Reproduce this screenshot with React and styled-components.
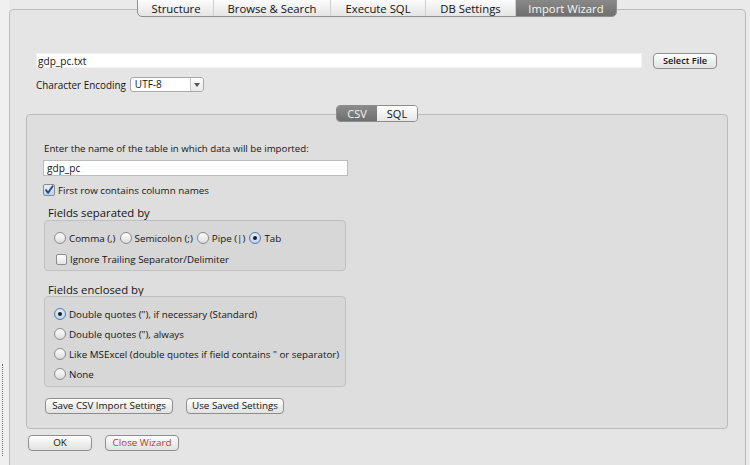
import React from "react";
import styled, { createGlobalStyle } from "styled-components";

const TABS = [
  { label: "Structure", width: 75 },
  { label: "Browse & Search", width: 117 },
  { label: "Execute SQL", width: 95 },
  { label: "DB Settings", width: 90 },
  { label: "Import Wizard", width: 101, active: true },
];

const SEPARATORS = [
  { label: "Comma (,)" },
  { label: "Semicolon (;)" },
  { label: "Pipe (|)" },
  { label: "Tab", checked: true },
];

const QUOTES = [
  { label: 'Double quotes ("), if necessary (Standard)', checked: true },
  { label: 'Double quotes ("), always' },
  { label: 'Like MSExcel (double quotes if field contains " or separator)' },
  { label: "None" },
];

const GlobalStyle = createGlobalStyle`
  html, body {
    margin: 0;
    padding: 0;
    background: #ebebeb;
  }
  #root {
    width: 750px;
    height: 465px;
    overflow: hidden;
    font-family: "Lucida Grande", "Open Sans", "Liberation Sans", sans-serif;
    color: #141414;
  }
`;

const Window = styled.div`
  display: flex;
  width: 750px;
  height: 465px;
  overflow: hidden;
  background: #eaeaea;
`;

const LeftStrip = styled.div`
  width: 9px;
  flex-shrink: 0;
  background: #f0f0f0;
  display: flex;
  flex-direction: column;
  padding: 364px 0 0 2px;
  box-sizing: border-box;
`;

const Splitter = styled.div`
  width: 0;
  height: 92px;
  border-left: 1px dotted #6d6d6d;
`;

const Main = styled.div`
  flex: 1;
  padding: 9px 4px 0 0;
  display: flex;
  flex-direction: column;
`;

const Panel = styled.div`
  border: 1px solid #bababa;
  border-bottom: none;
  border-radius: 5px 5px 0 0;
  background: #e5e5e5;
  min-height: 480px;
  padding: 0 17px 0 16px;
  display: flex;
  flex-direction: column;
`;

const TabRow = styled.div`
  display: flex;
  justify-content: center;
  margin-top: -13px;
`;

const TabBar = styled.div`
  display: flex;
  height: 20px;
  box-sizing: border-box;
  border: 1px solid #8f8f8f;
  border-radius: 0 0 5px 5px;
  overflow: hidden;
  background: linear-gradient(#ffffff, #e4e4e4);
`;

const Tab = styled.div`
  width: ${(p) => p.$width}px;
  display: flex;
  align-items: center;
  justify-content: center;
  padding-top: 2px;
  box-sizing: border-box;
  font-size: 11.3px;
  color: ${(p) => (p.$active ? "#f6f6f6" : "#111111")};
  background: ${(p) =>
    p.$active ? "linear-gradient(#8c8c8c, #6f6f6f)" : "transparent"};
  border-left: 1px solid ${(p) => (p.$first ? "transparent" : "#cfcfcf")};
`;

const FileRow = styled.div`
  display: flex;
  align-items: center;
  gap: 11px;
  margin-top: 35px;
  padding: 0 11px 0 10px;
  height: 17px;
`;

const TextField = styled.div`
  flex: ${(p) => (p.$grow ? 1 : "none")};
  height: ${(p) => p.$height}px;
  box-sizing: border-box;
  background: #ffffff;
  border: 1px solid ${(p) => (p.$bordered ? "#bcbcbc" : "#f2f2f2")};
  display: flex;
  align-items: center;
  padding-left: ${(p) => (p.$bordered ? 3 : 1)}px;
  font-size: 10.1px;
`;

const Button = styled.button`
  height: 16px;
  width: ${(p) => p.$width}px;
  padding: 0;
  box-sizing: border-box;
  border: 1px solid #8e8e8e;
  border-radius: 4px;
  background: linear-gradient(#ffffff, #ececec 60%, #e2e2e2);
  font-family: inherit;
  font-size: ${(p) => (p.$small ? "9.2px" : "9.8px")};
  font-weight: ${(p) => (p.$small ? 600 : 400)};
  color: ${(p) => (p.$danger ? "#c3372c" : "#141414")};
  line-height: 14px;
  flex-shrink: 0;
`;

const EncodingRow = styled.div`
  display: flex;
  align-items: center;
  gap: 4px;
  margin-top: 8px;
  padding-left: 10px;
  height: 15px;
`;

const Label = styled.span`
  font-size: 9.9px;
  line-height: 14px;
`;

const Select = styled.div`
  width: 74px;
  height: 15px;
  box-sizing: border-box;
  display: flex;
  background: #ffffff;
  border: 1px solid #a9a9a9;
  border-radius: 3px;
  font-size: 10px;
`;

const SelectValue = styled.span`
  flex: 1;
  padding-left: 4px;
  line-height: 13px;
`;

const SelectArrow = styled.span`
  width: 12px;
  border-left: 1px solid #c6c6c6;
  background: linear-gradient(#ffffff, #e8e8e8);
  border-radius: 0 3px 3px 0;
  display: flex;
  align-items: center;
  justify-content: center;

  &::after {
    content: "";
    border-left: 3px solid transparent;
    border-right: 3px solid transparent;
    border-top: 4px solid #555;
  }
`;

const InnerPanel = styled.div`
  margin-top: 22px;
  border: 1px solid #bbbbbb;
  border-radius: 4px;
  background: #dedede;
  padding: 0 16px 14px 16px;
  display: flex;
  flex-direction: column;
`;

const SegRow = styled.div`
  display: flex;
  justify-content: center;
  margin-top: -10px;
`;

const Segmented = styled.div`
  display: flex;
  height: 17px;
  border: 1px solid #8c8c8c;
  border-radius: 4px;
  overflow: hidden;
  box-sizing: border-box;
`;

const Segment = styled.div`
  width: ${(p) => p.$width}px;
  display: flex;
  align-items: center;
  justify-content: center;
  font-size: 11px;
  color: ${(p) => (p.$active ? "#f6f6f6" : "#111111")};
  background: ${(p) =>
    p.$active ? "linear-gradient(#8a8a8a, #6f6f6f)" : "linear-gradient(#ffffff, #e6e6e6)"};
`;

const Prompt = styled.div`
  margin-top: 20px;
  font-size: 9.7px;
  line-height: 14px;
  padding-left: 1px;
`;

const TableField = styled(TextField)`
  margin-top: 4px;
  width: 305px;
`;

const CheckRow = styled.label`
  display: flex;
  align-items: center;
  gap: ${(p) => p.$gap}px;
  margin-top: ${(p) => p.$top || 0}px;
  height: 14px;
  font-size: 9.8px;
`;

const Box = styled.span`
  width: ${(p) => p.$size}px;
  height: ${(p) => p.$size}px;
  margin-left: ${(p) => p.$indent || 0}px;
  box-sizing: border-box;
  border: 1px solid #8d8d8d;
  border-radius: 2px;
  background: ${(p) =>
    p.$checked ? "linear-gradient(#e6f0fb, #b9d2ee)" : "linear-gradient(#ffffff, #e3e3e3)"};
  display: flex;
  align-items: center;
  justify-content: center;
  flex-shrink: 0;
`;

const Heading = styled.div`
  margin: ${(p) => p.$top}px 0 0 5px;
  font-size: 11.3px;
  line-height: ${(p) => p.$lh}px;
`;

const Group = styled.div`
  width: 302px;
  margin-left: 1px;
  box-sizing: border-box;
  border: 1px solid #c0c0c0;
  border-radius: 4px;
  background: #d7d7d7;
  padding: ${(p) => p.$pad};
  display: flex;
  flex-direction: ${(p) => (p.$column ? "column" : "row")};
  flex-wrap: wrap;
  gap: ${(p) => p.$gap || 0}px;
`;

const InlineRow = styled.div`
  display: flex;
  align-items: center;
  height: 14px;
  width: 100%;
`;

const RadioItem = styled.label`
  display: flex;
  align-items: center;
  gap: 3px;
  height: ${(p) => p.$height || 14}px;
  margin-right: 4px;
  font-size: 9.8px;
  white-space: nowrap;
`;

const RadioDot = styled.span`
  width: 12px;
  height: 12px;
  box-sizing: border-box;
  border-radius: 50%;
  border: 1px solid ${(p) => (p.$checked ? "#5a7ea8" : "#8a8a8a")};
  background: ${(p) =>
    p.$checked
      ? "radial-gradient(circle at 50% 35%, #eef5fd, #a9c8ea)"
      : "linear-gradient(#ffffff, #dcdcdc)"};
  display: flex;
  align-items: center;
  justify-content: center;
  flex-shrink: 0;

  &::after {
    content: "";
    display: ${(p) => (p.$checked ? "block" : "none")};
    width: 4px;
    height: 4px;
    border-radius: 50%;
    background: #1b1b1b;
  }
`;

const ButtonRow = styled.div`
  display: flex;
  gap: ${(p) => p.$gap}px;
  margin-top: ${(p) => p.$top}px;
  padding-left: ${(p) => p.$left}px;
`;

const Radio = ({ label, checked, height }) => (
  <RadioItem $height={height}>
    <RadioDot $checked={checked} />
    <span>{label}</span>
  </RadioItem>
);

const CheckMark = () => (
  <svg width="10" height="10" viewBox="0 0 10 10">
    <path d="M2 5.2 L4.2 7.8 L8.6 1.2" fill="none" stroke="#24467e" strokeWidth="1.8" strokeLinecap="round" strokeLinejoin="round" />
  </svg>
);

const App = () => {
  return (
    <>
      <GlobalStyle />
      <Window>
        <LeftStrip>
          <Splitter />
        </LeftStrip>
        <Main>
          <Panel>
            <TabRow>
              <TabBar>
                {TABS.map((t, i) => (
                  <Tab key={t.label} $width={t.width} $active={t.active} $first={i === 0}>
                    {t.label}
                  </Tab>
                ))}
              </TabBar>
            </TabRow>

            <FileRow>
              <TextField $grow $height={15}>gdp_pc.txt</TextField>
              <Button $width={64} $small>Select File</Button>
            </FileRow>

            <EncodingRow>
              <Label>Character Encoding</Label>
              <Select>
                <SelectValue>UTF-8</SelectValue>
                <SelectArrow />
              </Select>
            </EncodingRow>

            <InnerPanel>
              <SegRow>
                <Segmented>
                  <Segment $width={40} $active>CSV</Segment>
                  <Segment $width={40}>SQL</Segment>
                </Segmented>
              </SegRow>

              <Prompt>Enter the name of the table in which data will be imported:</Prompt>
              <TableField $bordered $height={16}>gdp_pc</TableField>

              <CheckRow $gap={3} $top={7}>
                <Box $size={12} $checked>
                  <CheckMark />
                </Box>
                First row contains column names
              </CheckRow>

              <Heading $top={9} $lh={14}>Fields separated by</Heading>
              <Group $pad="10px 9px 4px 9px" $gap={7}>
                <InlineRow>
                  {SEPARATORS.map((s) => (
                    <Radio key={s.label} label={s.label} checked={s.checked} />
                  ))}
                </InlineRow>
                <CheckRow $gap={3}>
                  <Box $size={11} $indent={2} />
                  Ignore Trailing Separator/Delimiter
                </CheckRow>
              </Group>

              <Heading $top={12} $lh={13}>Fields enclosed by</Heading>
              <Group $column $pad="7px 9px 2px 9px">
                {QUOTES.map((q) => (
                  <Radio key={q.label} label={q.label} checked={q.checked} height={20} />
                ))}
              </Group>

              <ButtonRow $gap={13} $top={11} $left={2}>
                <Button $width={128}>Save CSV Import Settings</Button>
                <Button $width={98}>Use Saved Settings</Button>
              </ButtonRow>
            </InnerPanel>

            <ButtonRow $gap={13} $top={6} $left={2}>
              <Button $width={64}>OK</Button>
              <Button $width={74} $danger>Close Wizard</Button>
            </ButtonRow>
          </Panel>
        </Main>
      </Window>
    </>
  );
};

export default App;
